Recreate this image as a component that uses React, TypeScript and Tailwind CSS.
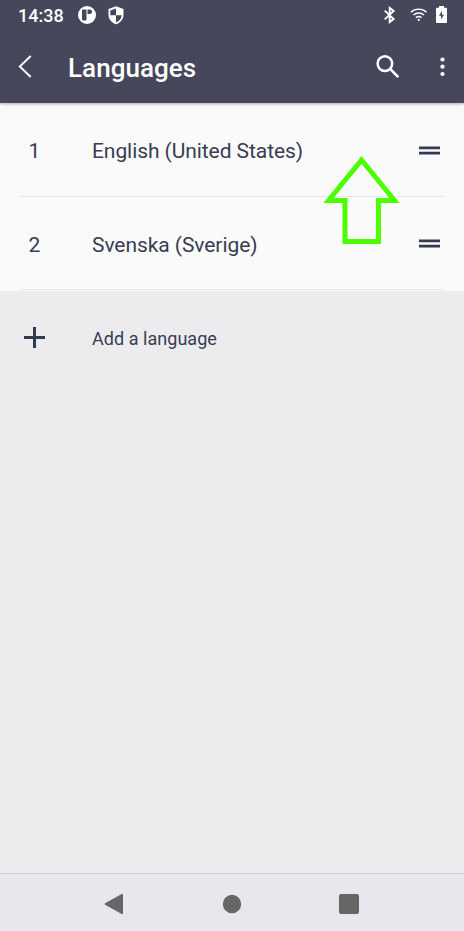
type Language = {
  position: number;
  name: string;
};

const languages: Language[] = [
  { position: 1, name: "English (United States)" },
  { position: 2, name: "Svenska (Sverige)" },
];

function StatusBar() {
  return (
    <div className="flex h-[30px] items-center pl-[18px] pr-[17px] text-white">
      <span className="w-[60px] pt-px text-[18px] leading-none font-medium">14:38</span>
      <svg width="18" height="18" viewBox="0 0 18 18">
        <circle cx="9" cy="9" r="9" fill="currentColor" />
        <rect x="4" y="3.500" width="4.500" height="11" rx="1" fill="#47475b" />
        <path d="M9.500 3.500h2.300a2.200 2.200 0 0 1 0 4.500H9.500z" fill="#47475b" />
      </svg>
      <svg className="ml-3" width="16" height="19" viewBox="0 0 16 19">
        <path d="M8 .3 15.500 3.100v5.600c0 4.400-3.100 8-7.500 9.600C3.600 16.700.5 13.100.5 8.700V3.100z" fill="currentColor" />
        <path d="M8 2.600V9.200H2.300V4.600zM8 9.200h5.700c-.3 3.400-2.500 6-5.700 7.300z" fill="#47475b" />
      </svg>

      <svg className="ml-auto" width="12" height="18" viewBox="0 0 12 18" fill="none" stroke="currentColor" strokeWidth="1.900">
        <path d="M1.700 4.600 10.700 13l-4 3V2l4 3-9 8.400" />
      </svg>
      <svg className="ml-[15px]" width="17" height="14" viewBox="0 0 17 14" fill="none" stroke="currentColor" strokeWidth="1.400">
        <path d="M.9 4.200a11.500 11.500 0 0 1 15.600 0M3.400 7a7.900 7.900 0 0 1 10.600 0M5.900 9.600a4.300 4.300 0 0 1 5.600 0" />
        <circle cx="8.700" cy="11.900" r="1.100" fill="currentColor" stroke="none" />
      </svg>
      <svg className="ml-[9px]" width="11" height="18" viewBox="0 0 11 18">
        <path d="M3 0h5v1.700h2a1 1 0 0 1 1 1V16a1 1 0 0 1-1 1H1a1 1 0 0 1-1-1V2.700a1 1 0 0 1 1-1h2z" fill="currentColor" />
        <path d="M6 5v3.700h2L5 13.500V9.800H3z" fill="#47475b" />
      </svg>
    </div>
  );
}

function Toolbar() {
  return (
    <div className="flex h-[73px] items-center pl-[18px] pr-[18px] text-white">
      <svg width="14" height="24" viewBox="0 0 14 24" fill="none" stroke="currentColor" strokeWidth="1.900">
        <path d="M12.700 1 1.800 11.500 12.700 22" />
      </svg>
      <h1 className="ml-9 pt-[3px] text-[26px] leading-none font-medium tracking-[0.050px]">Languages</h1>
      <svg className="ml-auto" width="24" height="24" viewBox="0 0 24 24" fill="none" stroke="currentColor" strokeWidth="2.500">
        <circle cx="9.900" cy="8.600" r="7.300" />
        <path d="m15.100 13.900 8.100 8.100" />
      </svg>
      <svg className="ml-[41px]" width="6" height="20" viewBox="0 0 6 20" fill="currentColor">
        <circle cx="2.500" cy="2.500" r="2.100" />
        <circle cx="2.500" cy="9.700" r="2.100" />
        <circle cx="2.500" cy="17" r="2.100" />
      </svg>
    </div>
  );
}

function LanguageRow({ language }: { language: Language }) {
  return (
    <li className="ml-[19px] mr-[19px] flex h-[93.5px] items-center border-b border-[#e6e6e7] text-[21px]">
      <span className="w-[73px] pt-[5px] pl-[9.5px] leading-none">{language.position}</span>
      <span className="pt-[5px] leading-none tracking-[-0.070px]">{language.name}</span>
      <svg className="mt-[3px] mr-[5px] ml-auto" width="21" height="10" viewBox="0 0 21 10" fill="#353c52">
        <path d="M0 .5h21v2.700H0zM0 5.700h21v2.700H0z" />
      </svg>
    </li>
  );
}

function NavigationBar() {
  return (
    <nav className="flex h-[58px] items-center border-t border-[#cfced6] bg-[#e8e7ed] pt-[3px] pl-[104px] text-[#666]">
      <svg width="20" height="22" viewBox="0 0 20 22" fill="currentColor">
        <path d="M18.200.8Q19 .4 19 1.400v19.200q0 1-.8.600L1 11.700Q0 11 1 10.300z" />
      </svg>
      <svg className="ml-[98px]" width="20" height="20" viewBox="0 0 20 20" fill="currentColor">
        <circle cx="10" cy="10" r="9.200" />
      </svg>
      <span className="ml-[97px] size-5 rounded-[2px] bg-current" />
    </nav>
  );
}

export default function App() {
  return (
    <div className="relative flex h-[931px] w-[464px] flex-col overflow-hidden bg-[#ececee] font-['Roboto',sans-serif] text-[#383d52]">
      <header className="z-10 h-[103px] bg-[#47475b] shadow-[0_1px_3px_rgba(0,0,0,0.3)]">
        <StatusBar />
        <Toolbar />
      </header>

      <main className="flex-1">
        <ul className="h-[188px] bg-[#fafafa]">
          {languages.map((language) => (
            <LanguageRow key={language.position} language={language} />
          ))}
        </ul>
        <button type="button" className="flex h-[94px] w-full items-center pl-6 text-left">
          <svg width="21" height="22" viewBox="0 0 21 22" stroke="#303b50" strokeWidth="3">
            <path d="M0 10.500h21M10.500 0v21" />
          </svg>
          <span className="ml-[47px] pt-[2px] text-[18px] leading-none tracking-[0.040px]">Add a language</span>
        </button>
      </main>

      <NavigationBar />

      {/* Arrow showing the direction to drag a language */}
      <svg
        className="pointer-events-none absolute top-[154px] left-[322px]"
        width="80"
        height="92"
        viewBox="0 0 80 92"
        fill="none"
        stroke="#4cff00"
        strokeWidth="5"
      >
        <path d="M39.500 6 6.500 46.500H23V87.500H56.500V46.500H72.500Z" />
      </svg>
    </div>
  );
}
